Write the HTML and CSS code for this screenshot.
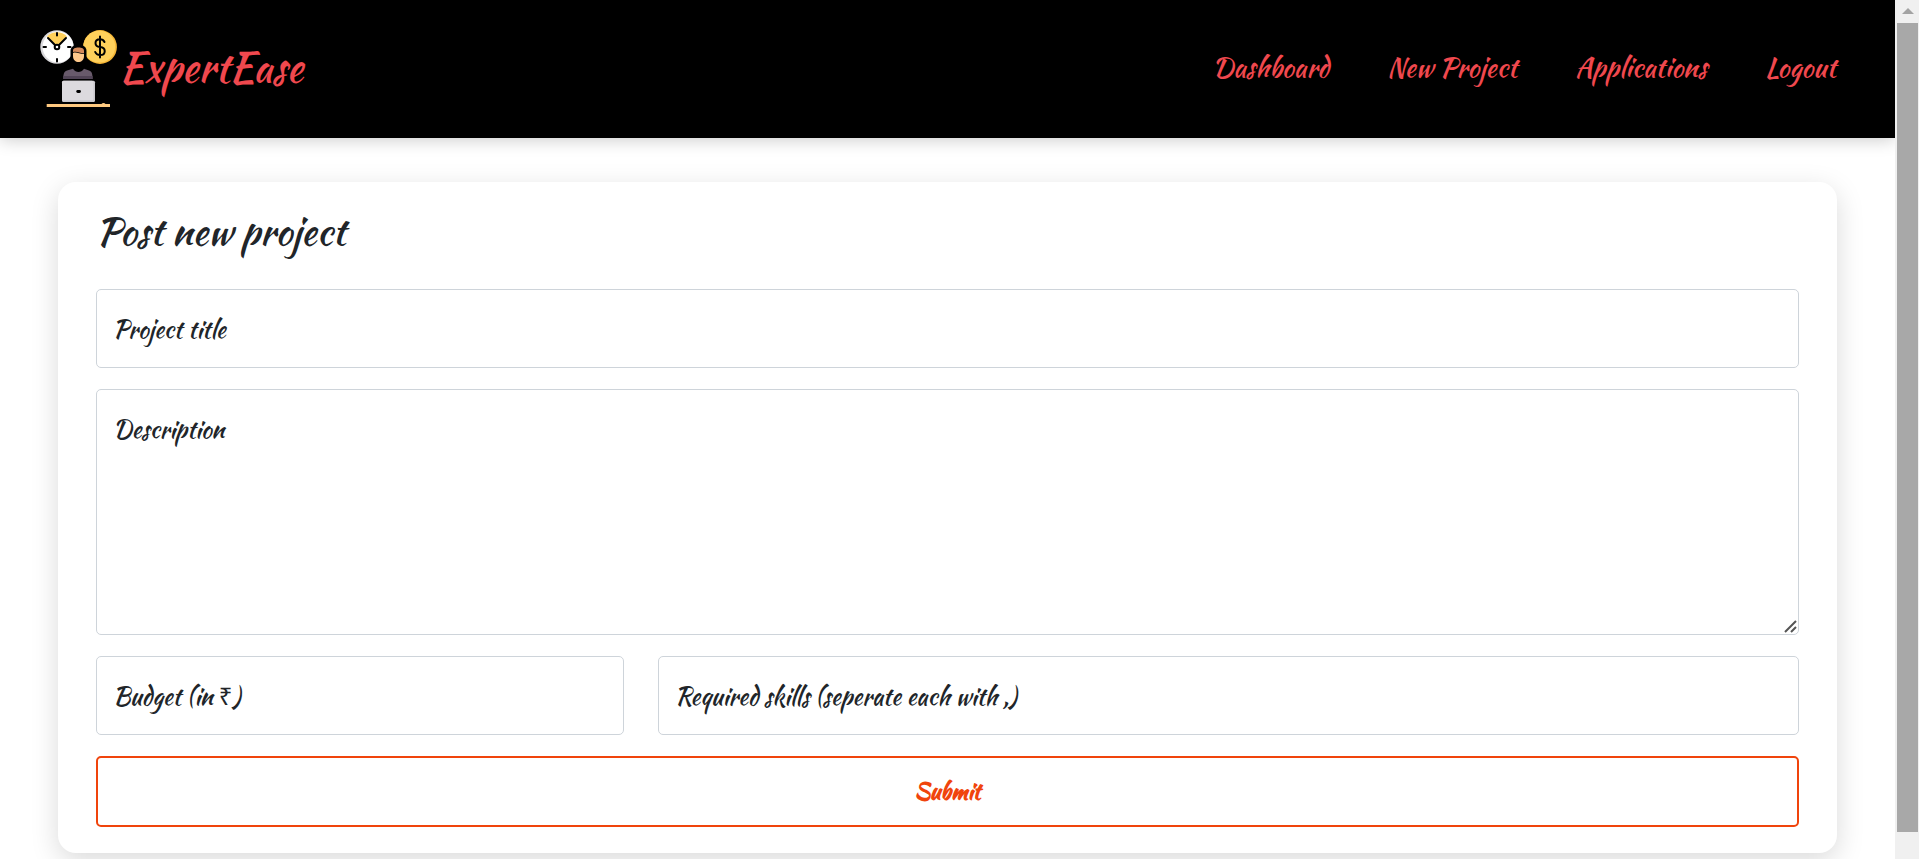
FILE: index.html
```html
<!DOCTYPE html>
<html lang="en">
<head>
  <meta charset="utf-8">
  <meta name="viewport" content="width=device-width, initial-scale=1">
  <title>ExpertEase</title>
  <link rel="stylesheet" href="styles.css">
</head>
<body>
  <div class="page">
    <header class="site-header">
      <a class="brand" href="#">
        <svg class="brand-icon" viewBox="0 0 78 78" aria-hidden="true">
          <circle cx="17" cy="18" r="16.7" fill="#d9d8db"/>
          <circle cx="18" cy="18" r="15.4" fill="#fff"/>
          <path d="M17 17 7 7.5A14 14 0 0 1 27 7.500z" fill="#ffd05b"/>
          <path d="M8 9l9 9 9-9M17 4v2.500M17 30v2.500M3.500 18h2.500M28 18h2.500" fill="none" stroke="#000" stroke-width="2" stroke-linecap="round"/>
          <circle cx="17" cy="18" r="2.300" fill="#fff" stroke="#000" stroke-width="2"/>
          <circle cx="60" cy="18" r="16.900" fill="#f7b737"/>
          <circle cx="59.300" cy="17.700" r="15.900" fill="#ffd05b"/>
          <path d="M60 7.500v21M64.500 13c-1-2-2.300-2.700-4.500-2.700-6 0-6 7.300 0 7.700 6.300.4 6.300 8 0 8-2.500 0-4-1-4.800-3" fill="none" stroke="#000" stroke-width="2" stroke-linecap="round"/>
          <path d="M30.500 33.500V22c0-4 3-6 8-6s8 2 8 6v11.500c-3 3-13 3-16 0z" fill="#000"/>
          <path d="M33 24c3-1.600 6 .8 11 .8V27c0 8-11 8-11 0z" fill="#ffc98c"/>
          <path d="M33 22c0-2.700 2-3.500 5.500-3.500s5.500.8 5.500 3.500v2c-4 .3-7-2.300-11-1z" fill="#d68a5b"/>
          <path d="M23.300 50c0-5 .7-7.500 3.700-8.500l6-1.800c3 4.400 8 4.400 11 0l5 1.800c3 1 3.600 3.500 3.600 8.500z" fill="#685a6b"/>
          <path d="M23.300 47h29.300v3H23.300z" fill="#514456"/>
          <rect x="22" y="51.700" width="33" height="21.300" rx="1.500" fill="#c9c7cc"/>
          <rect x="22" y="51.700" width="31.500" height="19.800" rx="1.500" fill="#dcdade"/>
          <rect x="36.300" y="61" width="4.600" height="3" rx="1.400" fill="#000"/>
          <path d="M6.700 75H61.500c.8-1.400 3.200-1.400 4 0H70v3H6.700z" fill="#ffc980"/>
        </svg>
        <span class="brand-name">ExpertEase</span>
      </a>
      <nav class="site-nav">
        <a href="#">Dashboard</a>
        <a href="#">New Project</a>
        <a href="#">Applications</a>
        <a href="#">Logout</a>
      </nav>
    </header>

    <main class="content">
      <form class="card">
        <h1 class="card-title">Post new project</h1>
        <div class="field">
          <input class="control" id="title" type="text">
          <label class="field-label" for="title">Project title</label>
        </div>
        <div class="field">
          <textarea class="control control-area" id="description"></textarea>
          <label class="field-label" for="description">Description</label>
          <svg class="grip" viewBox="0 0 13 13" aria-hidden="true"><path d="M1 12 12 1M7 12l5-5"/></svg>
        </div>
        <div class="field-row">
          <div class="field">
            <input class="control" id="budget" type="text" inputmode="numeric">
            <label class="field-label" for="budget">Budget (in ₹)</label>
          </div>
          <div class="field">
            <input class="control" id="skills" type="text">
            <label class="field-label" for="skills">Required skills (seperate each with ,)</label>
          </div>
        </div>
        <button class="submit" type="submit">Submit</button>
      </form>
    </main>
  </div>
  <div class="scrollbar" aria-hidden="true">
    <span class="scroll-arrow"></span>
    <span class="scroll-thumb"></span>
  </div>
</body>
</html>
```
FILE: styles.css
```css
* {
  box-sizing: border-box;
}

body {
  display: flex;
  margin: 0;
  background: #fff;
  color: #212529;
  font-family: "Kaushan Script", "Noto Sans", cursive;
  overflow-x: hidden;
}

.page {
  flex: 1;
  min-width: 0;
  overflow: hidden;
}

.site-header {
  display: flex;
  align-items: center;
  justify-content: space-between;
  flex-wrap: wrap;
  gap: 24px;
  min-height: 138px;
  padding: 0 59px 2px 40px;
  background: #000;
  box-shadow: 0 2px 16px rgba(0, 0, 0, 0.2);
}

.brand {
  display: flex;
  align-items: center;
  gap: 1px;
  color: #f0484e;
  text-decoration: none;
}

.brand-icon {
  width: 78px;
  height: 78px;
}

.brand-name {
  font-size: 41px;
  line-height: 48px;
}

.site-nav {
  display: flex;
  flex-wrap: wrap;
  gap: 58px;
}

.site-nav a {
  color: #f0484e;
  font-size: 27px;
  line-height: 32px;
  text-decoration: none;
}

.content {
  padding: 44px 58px 48px;
}

.card {
  display: flex;
  flex-direction: column;
  gap: 21px;
  padding: 26px 38px;
  border-radius: 18px;
  background: #fff;
  box-shadow: 0 8px 28px rgba(0, 0, 0, 0.15);
}

.card-title {
  margin: 0;
  padding-bottom: 12px;
  font-size: 38px;
  font-weight: 500;
  line-height: 48px;
}

.field {
  position: relative;
  display: flex;
}

.field-row {
  display: grid;
  grid-template-columns: 528fr 1141fr;
  gap: 34px;
}

.control {
  width: 100%;
  height: 79px;
  padding: 24px 17px;
  border: 1px solid #ced4da;
  border-radius: 5px;
  background: #fff;
  color: inherit;
  font: inherit;
  font-size: 24px;
}

.control-area {
  height: 246px;
  resize: none;
}

.field-label {
  position: absolute;
  top: 25px;
  left: 17px;
  font-size: 24px;
  line-height: 32px;
  pointer-events: none;
}

.grip {
  position: absolute;
  right: 2px;
  bottom: 2px;
  width: 13px;
  height: 13px;
  fill: none;
  stroke: #555;
  stroke-width: 2;
  pointer-events: none;
}

.submit {
  height: 71px;
  padding: 0 6px 2px;
  border: 2px solid #f0440c;
  border-radius: 5px;
  background: #fff;
  color: #f0440c;
  font: inherit;
  font-size: 22px;
  font-weight: 700;
  cursor: pointer;
}

.scrollbar {
  position: sticky;
  top: 0;
  display: flex;
  flex-direction: column;
  align-items: center;
  width: 24px;
  height: 100vh;
  padding: 8px 1px 27px 2px;
  background: #f0f0f0;
}

.scroll-arrow {
  border: 6px solid transparent;
  border-top: 0;
  border-bottom-color: #a3a3a3;
}

.scroll-thumb {
  flex: 1;
  width: 100%;
  margin-top: 9px;
  background: #a8a8a8;
}
```
